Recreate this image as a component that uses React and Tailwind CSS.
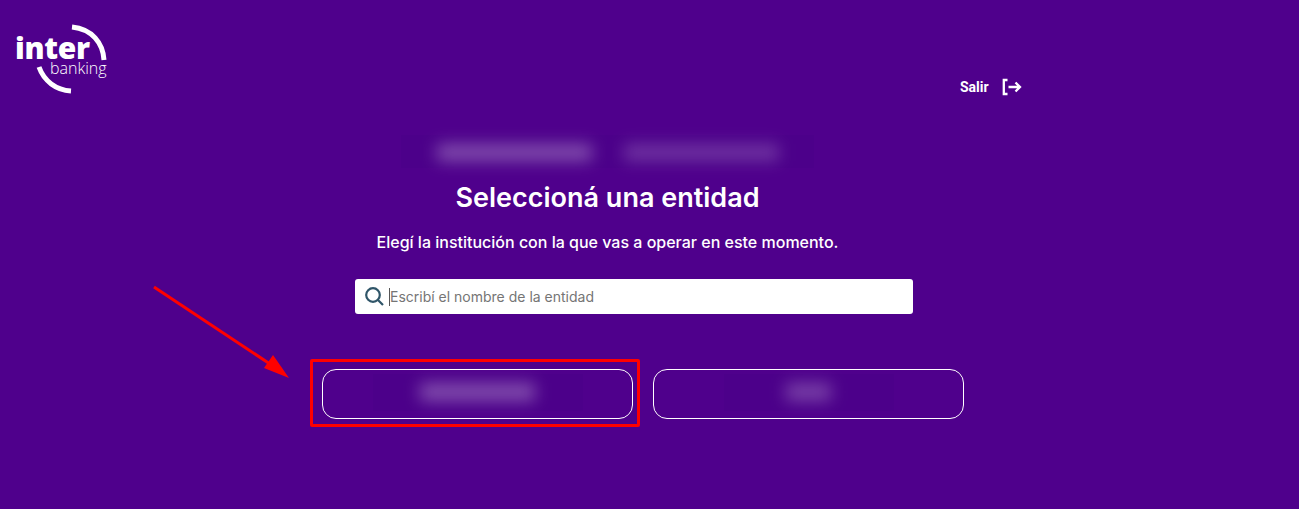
export default function App() {
  return (
    <div className="relative h-[509px] w-[1299px] overflow-hidden bg-[#4f008c] font-['Inter',sans-serif] text-white">
      <header className="flex h-[135px] items-start">
        <div className="relative ml-[15px] mt-[24px] h-[70px] w-[93px]">
          <svg className="absolute left-0 top-0" width="93" height="70" viewBox="0 0 93 70" fill="none">
            <path d="M57 3 C77 5 88 19 89 36" stroke="#fff" strokeWidth="5" />
            <path d="M24 43 C29 57 41 66 56 67" stroke="#fff" strokeWidth="5" />
          </svg>
          <span className="absolute left-0 top-[12px] text-[30px] font-extrabold leading-[24px] tracking-[-0.3px] font-['Open_Sans',sans-serif]">inter</span>
          <span className="absolute left-[35px] top-[36px] text-[16px] font-light leading-[16px] font-['Open_Sans',sans-serif]">banking</span>
        </div>
        <div className="ml-[852px] mt-[77px] flex h-[20px] items-center">
          <span className="text-[14px] font-bold font-['Roboto',sans-serif]">Salir</span>
          <svg className="ml-[13px]" width="20" height="18" viewBox="0 0 20 18" fill="none" stroke="#fff" strokeWidth="2.3">
            <path d="M5.5 2 H1.8 V16 H5.5" />
            <path d="M6.5 9 H18 M13.5 4.5 L18 9 L13.5 13.5" />
          </svg>
        </div>
      </header>
      <main className="ml-[322px] flex w-[642px] flex-col">
        <div className="flex w-[571px] flex-col items-center">
          <div className="flex h-[33px] w-[413px] items-center justify-center gap-[32px] bg-[#4c008a]">
            <div className="mt-[2px] h-[17px] w-[155px] bg-white/30 blur-[8px]" />
            <div className="mt-[2px] h-[17px] w-[155px] bg-white/20 blur-[8px]" />
          </div>
          <h1 className="mt-[10px] text-center text-[27px] font-semibold leading-[40px] font-['Inter',sans-serif]">Seleccioná una entidad</h1>
          <p className="mt-[14px] text-center text-[16px] font-medium leading-[20px]">Elegí la institución con la que vas a operar en este momento.</p>
        </div>
        <label className="ml-[33px] mt-[27px] flex h-[35px] w-[558px] items-center rounded-[3px] bg-white">
          <svg className="ml-[10px]" width="19" height="19" viewBox="0 0 19 19" fill="none" stroke="#2f5568" strokeWidth="2.2">
            <circle cx="8" cy="8" r="6.8" />
            <path d="M13 13 L18 18" />
          </svg>
          <span className="ml-[5px] h-[18px] w-px bg-[#555]" />
          <span className="text-[14px] text-[#757575]">Escribí el nombre de la entidad</span>
        </label>
        <div className="mt-[55px] flex gap-[20px]">
          <div className="relative flex h-[50px] w-[311px] items-center justify-center rounded-[14px] border border-white">
            <div className="mb-[4px] flex h-[37px] w-[210px] items-center justify-center bg-[#4c008a]">
              <div className="h-[18px] w-[115px] bg-white/30 blur-[8px]" />
            </div>
            <div className="absolute -left-[13px] -right-[8px] -top-[11px] -bottom-[9px] rounded-[2px] border-[3px] border-[#ff0000]" />
          </div>
          <div className="flex h-[50px] w-[311px] items-center justify-center rounded-[14px] border border-white">
            <div className="mb-[4px] flex h-[37px] w-[170px] items-center justify-center bg-[#4c008a]">
              <div className="h-[18px] w-[45px] bg-white/25 blur-[8px]" />
            </div>
          </div>
        </div>
      </main>
      <svg className="absolute left-[150px] top-[283px]" width="145" height="100" viewBox="0 0 145 100" fill="none">
        <path d="M4 4 L120 81" stroke="#ff0000" strokeWidth="3" />
        <path d="M139 95 L114 85 L123 72 Z" fill="#ff0000" />
      </svg>
    </div>
  );
}
